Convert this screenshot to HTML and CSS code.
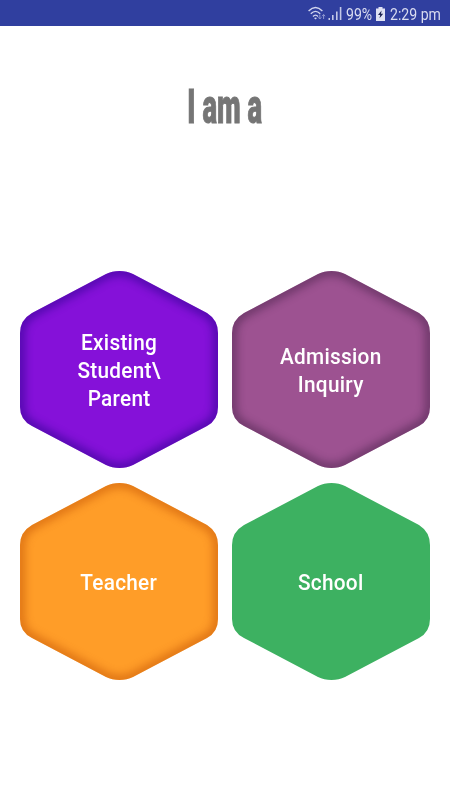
FILE: index.html
```html
<!DOCTYPE html>
<html lang="en">
<head>
    <meta charset="UTF-8">
    <title>I am a</title>
    <meta name="viewport" content="width=device-width, initial-scale=1.0">
    <link rel="stylesheet" href="styles.css">
</head>
<body>
    <!-- Shared hexagon shape and inner shadow blur -->
    <svg class="defs" width="0" height="0" aria-hidden="true">
        <defs>
            <path id="hex" d="M99.5 0Q107 0 113 3L187 42Q198 49 198 62V136Q198 149 187 155L113 194Q107 197 99.5 197Q92 197 86 194L12 155Q0 149 0 136V62Q0 49 12 42L86 3Q92 0 99.5 0Z"/>
            <clipPath id="hexClip"><use href="#hex"/></clipPath>
            <filter id="soft" x="-20%" y="-20%" width="140%" height="140%" color-interpolation-filters="sRGB">
                <feGaussianBlur stdDeviation="5"/>
            </filter>
        </defs>
    </svg>

    <header class="status-bar">
        <svg class="signal-icons" width="36" height="16" viewBox="0 0 36 16">
            <g fill="none" stroke="#d3d7ef" stroke-width="1.4">
                <path d="M.6 5Q7.5-1.9 14.4 5"/>
                <path d="M2.8 7.8Q7.5 3 12.2 7.8"/>
                <path d="M5 10.4Q7.5 7.8 10 10.4"/>
            </g>
            <path d="M6 12L7.5 13.6L9 12Q7.5 10.8 6 12Z" fill="#d3d7ef"/>
            <path d="M11.8 8.5V13M10.3 11.3L11.8 13L13.3 11.3M15.6 13V8.5M14.1 10.2L15.6 8.5L17.1 10.2" fill="none" stroke="#8f98d0" stroke-width="1"/>
            <g fill="#c3c8e7">
                <path d="M20.5 12h1.5v2h-1.5zM24 9h1.6v5H24zM28 5.5h1.6V14H28zM31.8 1h1.6v13h-1.6z"/>
            </g>
        </svg>
        <span class="battery-text">99%</span>
        <svg class="battery-icon" width="9" height="14" viewBox="0 0 9 14">
            <path d="M2.5 0h4v1.5H9V14H0V1.5h2.5z" fill="#dfe2f4"/>
            <path d="M5.6 3.5L2 8h2.2L3.5 11.3L7.2 6.7H5z" fill="#1d2452"/>
        </svg>
        <span class="clock">2:29 pm</span>
    </header>

    <main class="content">
        <h1 class="title"><span>I am a</span></h1>
        <div class="role-grid">
            <button class="role existing">
                <svg class="hexagon" viewBox="0 0 198 197">
                    <use href="#hex"/>
                    <g clip-path="url(#hexClip)"><use href="#hex" class="edge" filter="url(#soft)"/></g>
                </svg>
                <span>Existing<br>Student\<br>Parent</span>
            </button>
            <button class="role admission">
                <svg class="hexagon" viewBox="0 0 198 197">
                    <use href="#hex"/>
                    <g clip-path="url(#hexClip)"><use href="#hex" class="edge" filter="url(#soft)"/></g>
                </svg>
                <span>Admission<br>Inquiry</span>
            </button>
            <button class="role teacher">
                <svg class="hexagon" viewBox="0 0 198 197">
                    <use href="#hex"/>
                    <g clip-path="url(#hexClip)"><use href="#hex" class="edge" filter="url(#soft)"/></g>
                </svg>
                <span>Teacher</span>
            </button>
            <button class="role school">
                <svg class="hexagon" viewBox="0 0 198 197">
                    <use href="#hex"/>
                </svg>
                <span>School</span>
            </button>
        </div>
    </main>
</body>
</html>
```
FILE: styles.css
```css
html, body {
    margin: 0;
    padding: 0;
    background: #fff;
    font-family: Roboto, sans-serif;
}
.defs {
    display: block;
}
/* Status bar */
.status-bar {
    box-sizing: border-box;
    height: 26px;
    padding: 2px 9px 0 0;
    display: flex;
    align-items: center;
    justify-content: flex-end;
    background: #303f9f;
    color: #d9dcf0;
    font-size: 16px;
    line-height: 24px;
    white-space: nowrap;
}
.signal-icons {
    margin-right: 2px;
}
.battery-text, .clock {
    padding-top: 1px;
    transform: scaleX(0.88);
    transform-origin: left;
}
.battery-text {
    width: 26px;
    margin-right: 4px;
}
.battery-icon {
    margin-right: 5px;
}
.clock {
    width: 51px;
}
/* Title */
.title {
    height: 60px;
    margin: 51px 0 0 0;
    color: #757575;
    font-size: 49px;
    font-weight: 900;
    line-height: 60px;
    text-align: center;
}
.title span {
    display: inline-block;
    transform: scaleX(0.56);
    white-space: nowrap;
    -webkit-text-stroke: 1px #757575;
}
/* Role buttons */
.role-grid {
    display: grid;
    grid-template-columns: 198px 198px;
    justify-content: center;
    gap: 15px 14px;
    margin-top: 134px;
}
.role {
    display: grid;
    place-items: center;
    width: 198px;
    height: 197px;
    padding: 0;
    border: none;
    background: none;
    color: #fff;
    font-family: Roboto, sans-serif;
    font-size: 22px;
    font-weight: 500;
    line-height: 28px;
    letter-spacing: 0.3px;
    cursor: pointer;
}
.role .hexagon, .role span {
    grid-area: 1 / 1;
}
.role span {
    z-index: 1;
    padding-top: 2px;
    transform: scaleX(0.945);
}
.hexagon {
    display: block;
    width: 198px;
    height: 197px;
}
.edge {
    fill: none;
    stroke-width: 8;
    opacity: 0.6;
}
.existing { fill: #8511d9; }
.existing .edge { stroke: #1c0080; }
.admission { fill: #9d5291; }
.admission .edge { stroke: #3c1c40; }
.teacher { fill: #ff9d28; }
.teacher .edge { stroke: #bd4a00; }
.school { fill: #3db161; }
```
